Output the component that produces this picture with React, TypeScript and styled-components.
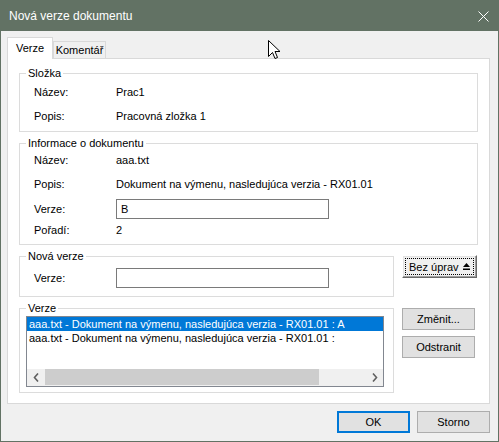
import styled, { createGlobalStyle } from "styled-components";

const GlobalStyle = createGlobalStyle`
  html, body {
    margin: 0;
    padding: 0;
    background: #f0f0f0;
  }
  body {
    font-family: "Liberation Sans", Arial, sans-serif;
    font-size: 11px;
    color: #000;
  }
`;

const Window = styled.div`
  position: relative;
  width: 499px;
  height: 442px;
  box-sizing: border-box;
  border: 1px solid #627264;
  display: flex;
  flex-direction: column;
  background: #f0f0f0;
  overflow: hidden;
`;

const TitleBar = styled.div`
  height: 30px;
  flex: none;
  background: #627264;
  color: #fff;
  font-size: 12px;
  display: flex;
  align-items: center;
  justify-content: space-between;
  padding: 0 9px 0 8px;
`;

const Body = styled.div`
  flex: 1;
  display: flex;
  flex-direction: column;
  padding: 6px 8px 0 6px;
`;

const TabStrip = styled.div`
  display: flex;
  align-items: flex-end;
  height: 21px;
`;

const Tab = styled.div<{ $active?: boolean }>`
  box-sizing: border-box;
  display: flex;
  align-items: center;
  justify-content: center;
  border: 1px solid #d9d9d9;
  border-bottom: none;
  position: relative;
  z-index: ${(p) => (p.$active ? 1 : 0)};
  width: ${(p) => (p.$active ? 46 : 53)}px;
  height: ${(p) => (p.$active ? 22 : 17)}px;
  margin-bottom: ${(p) => (p.$active ? -1 : 0)}px;
  background: ${(p) => (p.$active ? "#fff" : "#f0f0f0")};
  padding-bottom: ${(p) => (p.$active ? 2 : 0)}px;
`;

const Panel = styled.div`
  box-sizing: border-box;
  height: 346px;
  background: #fff;
  border: 1px solid #d9d9d9;
  padding: 7px 11px 0 11px;
  display: flex;
  flex-direction: column;
  gap: 4px;
`;

/* group box drawn like a win32 frame */
const Group = styled.fieldset<{ $pad?: string }>`
  margin: 0;
  min-width: 0;
  border: 1px solid #dcdcdc;
  padding: ${(p) => p.$pad ?? "0 14px 3px 14px"};
`;

const Legend = styled.legend<{ $shift?: number }>`
  padding: 0 2px;
  margin-left: ${(p) => p.$shift ?? -8}px;
  line-height: 14px;
`;

const Row = styled.div<{ $h: number }>`
  display: grid;
  grid-template-columns: 82px auto;
  align-items: center;
  height: ${(p) => p.$h}px;
`;

const TextBox = styled.div`
  box-sizing: border-box;
  width: 213px;
  height: 20px;
  border: 1px solid #7a7a7a;
  background: #fff;
  padding: 0 4px;
  display: flex;
  align-items: center;
`;

const Split = styled.div`
  display: grid;
  grid-template-columns: 375px 76px;
  column-gap: 8px;
  row-gap: 4px;
`;

const ButtonColumn = styled.div`
  display: flex;
  flex-direction: column;
  gap: 6px;
  margin-top: 7px;
`;

const Button = styled.div<{ $w?: number; $default?: boolean }>`
  box-sizing: border-box;
  width: ${(p) => p.$w ?? 73}px;
  height: 22px;
  background: #e1e1e1;
  border: ${(p) => (p.$default ? "2px solid #0078d7" : "1px solid #adadad")};
  display: flex;
  align-items: center;
  justify-content: center;
`;

const ClassicButton = styled.div`
  box-sizing: border-box;
  align-self: start;
  margin-top: 6px;
  width: 75px;
  height: 23px;
  background: #f0f0f0;
  border: 1px solid;
  border-color: #ffffff #696969 #696969 #ffffff;
  box-shadow: inset -1px -1px #a0a0a0, inset 1px 1px #e3e3e3;
  padding: 2px;
`;

const FocusRect = styled.div`
  box-sizing: border-box;
  height: 100%;
  border: 1px dotted #000;
  display: flex;
  align-items: center;
  justify-content: space-between;
  padding: 0 3px 0 3px;
  white-space: nowrap;
`;

const ListBox = styled.div`
  box-sizing: border-box;
  margin-top: 1px;
  height: 71px;
  border: 1px solid #828790;
  background: #fff;
  display: flex;
  flex-direction: column;
`;

const Items = styled.div`
  flex: 1;
  overflow: hidden;
`;

const Item = styled.div<{ $selected?: boolean }>`
  height: 14px;
  line-height: 14px;
  padding-left: 2px;
  white-space: nowrap;
  background: ${(p) => (p.$selected ? "#0078d7" : "transparent")};
  color: ${(p) => (p.$selected ? "#fff" : "#000")};
`;

const ScrollBar = styled.div`
  height: 17px;
  flex: none;
  display: flex;
  background: #f0f0f0;
`;

const ScrollArrow = styled.div`
  width: 17px;
  display: flex;
  align-items: center;
  justify-content: center;
`;

const Thumb = styled.div`
  width: 274px;
  margin: 0 0 1px 1px;
  background: #cdcdcd;
`;

const Track = styled.div`
  flex: 1;
`;

const Footer = styled.div`
  display: flex;
  justify-content: flex-end;
  gap: 7px;
  margin-top: 7px;
`;

const Cursor = styled.svg`
  position: absolute;
  left: 267px;
  top: 39px;
`;

function Chevron({ left }: { left?: boolean }) {
  return (
    <svg width="6" height="9" viewBox="0 0 6 9">
      <polyline
        points={left ? "5,0.5 1.5,4.5 5,8.5" : "1,0.5 4.5,4.5 1,8.5"}
        fill="none"
        stroke="#606060"
        strokeWidth="1.6"
      />
    </svg>
  );
}

export default function App() {
  return (
    <>
      <GlobalStyle />
      <Window>
        <TitleBar>
          <span>Nová verze dokumentu</span>
          <svg width="11" height="11" viewBox="0 0 11 11">
            <path d="M0.5 0.5 L10.5 10.5 M10.5 0.5 L0.5 10.5" stroke="#fff" strokeWidth="1" />
          </svg>
        </TitleBar>
        <Body>
          <TabStrip>
            <Tab $active>Verze</Tab>
            <Tab>Komentář</Tab>
          </TabStrip>
          <Panel>
            <Group>
              <Legend>Složka</Legend>
              <Row $h={24}>
                <span>Název:</span>
                <span>Prac1</span>
              </Row>
              <Row $h={24}>
                <span>Popis:</span>
                <span>Pracovná zložka 1</span>
              </Row>
            </Group>
            <Group $pad="0 14px 4px 14px">
              <Legend>Informace o dokumentu</Legend>
              <Row $h={20}>
                <span>Název:</span>
                <span>aaa.txt</span>
              </Row>
              <Row $h={28}>
                <span>Popis:</span>
                <span>Dokument na výmenu, nasledujúca verzia - RX01.01</span>
              </Row>
              <Row $h={22}>
                <span>Verze:</span>
                <TextBox>B</TextBox>
              </Row>
              <Row $h={20}>
                <span>Pořadí:</span>
                <span>2</span>
              </Row>
            </Group>
            <Split>
              <Group>
                <Legend>Nová verze</Legend>
                <Row $h={30}>
                  <span>Verze:</span>
                  <TextBox />
                </Row>
              </Group>
              <ClassicButton>
                <FocusRect>
                  <span>Bez úprav</span>
                  <svg width="7" height="7" viewBox="0 0 7 7">
                    <path d="M3.5 0 L7 4 L0 4 Z M0 5.5 H7 V7 H0 Z" fill="#000" />
                  </svg>
                </FocusRect>
              </ClassicButton>
              <Group $pad="0 9px 5px 6px">
                <Legend $shift={0}>Verze</Legend>
                <ListBox>
                  <Items>
                    <Item $selected>aaa.txt - Dokument na výmenu, nasledujúca verzia - RX01.01 : A</Item>
                    <Item>aaa.txt - Dokument na výmenu, nasledujúca verzia - RX01.01 :</Item>
                  </Items>
                  <ScrollBar>
                    <ScrollArrow>
                      <Chevron left />
                    </ScrollArrow>
                    <Thumb />
                    <Track />
                    <ScrollArrow>
                      <Chevron />
                    </ScrollArrow>
                  </ScrollBar>
                </ListBox>
              </Group>
              <ButtonColumn>
                <Button>Změnit...</Button>
                <Button>Odstranit</Button>
              </ButtonColumn>
            </Split>
          </Panel>
          <Footer>
            <Button $default>OK</Button>
            <Button>Storno</Button>
          </Footer>
        </Body>
        <Cursor width="13" height="20" viewBox="0 0 13 20">
          <path
            d="M0.5 0.5 L0.5 16.5 L4.5 12.5 L7 18.5 L9.5 17.5 L7 11.5 L12 11.5 Z"
            fill="#fff"
            stroke="#000"
            strokeWidth="1"
            strokeLinejoin="miter"
          />
        </Cursor>
      </Window>
    </>
  );
}
